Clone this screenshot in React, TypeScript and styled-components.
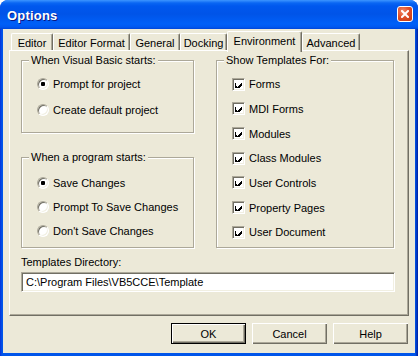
import React from 'react';
import styled, { createGlobalStyle } from 'styled-components';

const GlobalStyle = createGlobalStyle`
  html, body {
    margin: 0;
    padding: 0;
    background: #ffffff;
  }
  body {
    font-family: "Liberation Sans", Arial, sans-serif;
    font-size: 11px;
    color: #000;
  }
`;

const Window = styled.div`
  width: 418px;
  height: 356px;
  box-sizing: border-box;
  display: flex;
  flex-direction: column;
  background: linear-gradient(to right, #0831d9 0px, #0055ea 2px, #0055ea 415px, #001ea0 418px);
  border-radius: 8px 8px 0 0;
  overflow: hidden;
`;

const TitleBar = styled.div`
  height: 29px;
  flex: none;
  display: flex;
  align-items: center;
  justify-content: space-between;
  padding: 0 5px 0 7px;
  background: linear-gradient(
    to bottom,
    #3d95ff 0px,
    #0a66f3 3px,
    #0058ee 6px,
    #0054e8 14px,
    #0060f8 24px,
    #0058f0 27px,
    #0046d8 29px
  );
`;

const Title = styled.span`
  color: #fff;
  font-weight: bold;
  font-size: 13px;
  letter-spacing: 0.2px;
  text-shadow: 1px 1px 0 #0a1883;
  margin-top: 1px;
`;

const CloseButton = styled.div`
  width: 14px;
  height: 14px;
  margin-top: -1px;
  border: 1px solid #fff;
  border-radius: 3px;
  display: flex;
  align-items: center;
  justify-content: center;
  background: radial-gradient(circle at 35% 30%, #f08a6a 0%, #e0502a 45%, #c2380f 100%);
`;

const Client = styled.div`
  flex: 1;
  margin: 0 3px 3px 3px;
  background: #ece9d8;
  display: flex;
  flex-direction: column;
  padding: 2px 6px 0 6px;
`;

const TabStrip = styled.div`
  display: flex;
  align-items: flex-end;
  height: 19px;
  padding-left: 2px;
  position: relative;
  z-index: 1;
`;

const Tab = styled.div<{ $active?: boolean; $w: number }>`
  box-sizing: border-box;
  width: ${(p) => p.$w}px;
  height: ${(p) => (p.$active ? '21px' : '17px')};
  margin-bottom: ${(p) => (p.$active ? '-2px' : '0')};
  display: flex;
  justify-content: center;
  align-items: ${(p) => (p.$active ? 'flex-start' : 'center')};
  padding-top: ${(p) => (p.$active ? '3px' : '1px')};
  background: #ece9d8;
  border-top: 1px solid #fff;
  border-left: 1px solid #fff;
  border-right: 1px solid #716f64;
  border-radius: 2px 2px 0 0;
  box-shadow: inset -1px 0 0 #aca899;
  white-space: nowrap;
`;

const Panel = styled.div`
  box-sizing: border-box;
  height: 266px;
  border-top: 1px solid #fff;
  border-left: 1px solid #fff;
  border-right: 1px solid #716f64;
  border-bottom: 1px solid #716f64;
  box-shadow: inset -1px -1px 0 #aca899;
  padding: 9px 14px 0 11px;
  display: flex;
  flex-direction: column;
`;

const Columns = styled.div`
  display: flex;
  gap: 22px;
`;

const Column = styled.div`
  display: flex;
  flex-direction: column;
  gap: 24px;
`;

const Group = styled.div<{ $w: number; $h: number }>`
  box-sizing: border-box;
  width: ${(p) => p.$w}px;
  height: ${(p) => p.$h}px;
  padding: 0 0 0 15px;
  border: 1px solid #aca899;
  box-shadow: inset 1px 1px 0 #fff, 1px 1px 0 #fff;
  display: flex;
  flex-direction: column;
`;

const Caption = styled.span`
  align-self: flex-start;
  margin: -7px 0 0 -8px;
  padding: 0 2px;
  line-height: 13px;
  background: #ece9d8;
`;

const Rows = styled.div<{ $top: number }>`
  display: flex;
  flex-direction: column;
  padding-top: ${(p) => p.$top}px;
`;

const Option = styled.div<{ $h: number }>`
  height: ${(p) => p.$h}px;
  display: flex;
  align-items: center;
  gap: 4px;
`;

const Radio = styled.span<{ $on?: boolean }>`
  box-sizing: border-box;
  width: 12px;
  height: 12px;
  border-radius: 50%;
  border: 1px solid;
  border-color: #aca899 #fff #fff #aca899;
  background: #fff;
  box-shadow: inset 1px 1px 0 #716f64, inset -1px -1px 0 #f1efe2;
  display: flex;
  align-items: center;
  justify-content: center;
  &::after {
    content: '';
    width: 4px;
    height: 4px;
    border-radius: 1px;
    background: ${(p) => (p.$on ? '#000' : 'transparent')};
  }
`;

const CheckBox = styled.span`
  box-sizing: border-box;
  width: 13px;
  height: 13px;
  border: 1px solid;
  border-color: #aca899 #fff #fff #aca899;
  background: #fff;
  box-shadow: inset 1px 1px 0 #716f64, inset -1px -1px 0 #f1efe2;
  display: flex;
  align-items: center;
  justify-content: center;
`;

const DirLabel = styled.div`
  margin-top: 8px;
  line-height: 13px;
`;

const TextBox = styled.div`
  box-sizing: border-box;
  margin-top: 3px;
  width: 374px;
  height: 20px;
  background: #fff;
  border: 1px solid;
  border-color: #aca899 #fff #fff #aca899;
  box-shadow: inset 1px 1px 0 #716f64, inset -1px -1px 0 #f1efe2;
  padding: 0 4px;
  display: flex;
  align-items: center;
`;

const ButtonRow = styled.div`
  display: flex;
  justify-content: flex-end;
  gap: 6px;
  margin-top: 7px;
  padding-right: 1px;
`;

const Button = styled.div<{ $default?: boolean }>`
  box-sizing: border-box;
  width: 75px;
  height: 21px;
  display: flex;
  align-items: center;
  justify-content: center;
  background: #ece9d8;
  border: ${(p) => (p.$default ? '1px solid #000' : 'none')};
  box-shadow: inset 1px 1px 0 #fff, inset -1px -1px 0 #716f64, inset -2px -2px 0 #aca899;
`;

const Check = () => (
  <svg width="7" height="7" viewBox="0 0 7 7" shapeRendering="crispEdges">
    <path d="M0 2h1v3h1v1h1v-1h1v-1h1v-1h1v-1h1v3h-1v1h-1v1h-1v1h-1v1h-1v-1h-1v-1h-1z" fill="#000" />
  </svg>
);

const CloseX = () => (
  <svg width="8" height="8" viewBox="0 0 8 8">
    <path d="M1 1L7 7M7 1L1 7" stroke="#fff" strokeWidth="2" strokeLinecap="square" />
  </svg>
);

const tabs = [
  { label: 'Editor', w: 42 },
  { label: 'Editor Format', w: 77 },
  { label: 'General', w: 50 },
  { label: 'Docking', w: 47 },
  { label: 'Environment', w: 75 },
  { label: 'Advanced', w: 58 },
];
const templates = ['Forms', 'MDI Forms', 'Modules', 'Class Modules', 'User Controls', 'Property Pages', 'User Document'];

const App: React.FC = () => {
  return (
    <>
      <GlobalStyle />
      <Window>
        <TitleBar>
          <Title>Options</Title>
          <CloseButton>
            <CloseX />
          </CloseButton>
        </TitleBar>
        <Client>
          <TabStrip>
            {tabs.map((t) => (
              <Tab key={t.label} $w={t.w} $active={t.label === 'Environment'}>
                {t.label}
              </Tab>
            ))}
          </TabStrip>
          <Panel>
            <Columns>
              <Column>
                <Group $w={173} $h={73}>
                  <Caption>When Visual Basic starts:</Caption>
                  <Rows $top={4}>
                    <Option $h={26}>
                      <Radio $on />
                      Prompt for project
                    </Option>
                    <Option $h={26}>
                      <Radio />
                      Create default project
                    </Option>
                  </Rows>
                </Group>
                <Group $w={173} $h={91}>
                  <Caption>When a program starts:</Caption>
                  <Rows $top={7}>
                    <Option $h={24}>
                      <Radio $on />
                      Save Changes
                    </Option>
                    <Option $h={24}>
                      <Radio />
                      Prompt To Save Changes
                    </Option>
                    <Option $h={24}>
                      <Radio />
                      Don't Save Changes
                    </Option>
                  </Rows>
                </Group>
              </Column>
              <Group $w={179} $h={188}>
                <Caption>Show Templates For:</Caption>
                <Rows $top={5}>
                  {templates.map((t) => (
                    <Option key={t} $h={24.67}>
                      <CheckBox>
                        <Check />
                      </CheckBox>
                      {t}
                    </Option>
                  ))}
                </Rows>
              </Group>
            </Columns>
            <DirLabel>Templates Directory:</DirLabel>
            <TextBox>C:\Program Files\VB5CCE\Template</TextBox>
          </Panel>
          <ButtonRow>
            <Button $default>OK</Button>
            <Button>Cancel</Button>
            <Button>Help</Button>
          </ButtonRow>
        </Client>
      </Window>
    </>
  );
};

export default App;
